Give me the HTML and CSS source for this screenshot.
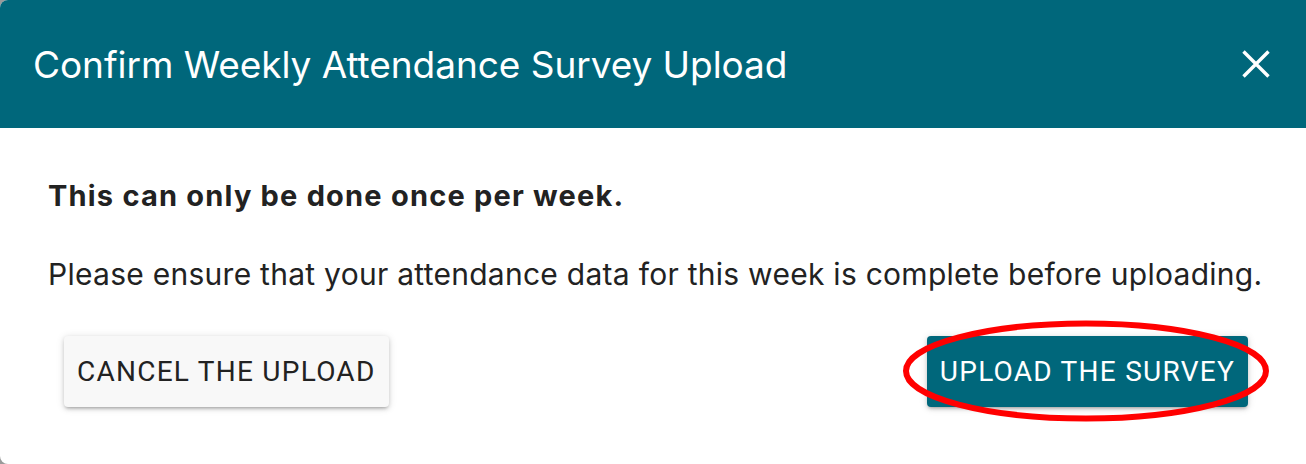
FILE: index.html
```html
<!DOCTYPE html>
<html>
<head>
<meta charset="utf-8">
<link rel="stylesheet" href="styles.css">
</head>
<body>
<div class="dialog">
  <header class="dialog-header">
    <h2 class="dialog-title">Confirm Weekly Attendance Survey Upload</h2>
    <button class="close-btn" aria-label="Close">
      <svg width="28" height="28" viewBox="0 0 28 28"><path d="M1.5 1.5 L26.5 26.5 M26.5 1.5 L1.5 26.5" stroke="#fff" stroke-width="3.4" stroke-linecap="butt"/></svg>
    </button>
  </header>
  <div class="dialog-content">
    <p class="warn">This can only be done once per week.</p>
    <p class="info">Please ensure that your attendance data for this week is complete before uploading.</p>
  </div>
  <div class="dialog-actions">
    <button class="btn btn-cancel">Cancel the upload</button>
    <div class="upload-wrap">
      <button class="btn btn-upload">Upload the survey</button>
      <svg class="highlight" width="380" height="112" viewBox="0 0 380 112"><ellipse cx="190" cy="56" rx="180" ry="47.5" fill="none" stroke="#ff0000" stroke-width="6"/></svg>
    </div>
  </div>
</div>
</body>
</html>
```
FILE: styles.css
```css
html, body {
  margin: 0;
  padding: 0;
  height: 100%;
}
body {
  background: #9a9a9a;
  font-family: Inter, "Liberation Sans", sans-serif;
  overflow: hidden;
}
.dialog {
  background: #fff;
  height: 464px;
  border-radius: 8px 0 0 8px;
  overflow: hidden;
  display: flex;
  flex-direction: column;
}
.dialog-header {
  background: #00677b;
  height: 128px;
  flex: none;
  display: flex;
  align-items: center;
  justify-content: space-between;
  padding: 0 36px 0 33px;
}
.dialog-title {
  margin: 0;
  color: #fff;
  font-weight: 400;
  font-size: 37px;
  letter-spacing: -0.05px;
}
.close-btn {
  background: none;
  border: 0;
  padding: 0;
  width: 28px;
  height: 28px;
  display: flex;
}
.dialog-content {
  padding: 50px 40px 0 48px;
  color: #222;
}
.warn {
  margin: 0;
  font-size: 29px;
  font-weight: 700;
  line-height: 36px;
  letter-spacing: 1.2px;
}
.info {
  margin: 42px 0 0;
  font-size: 30px;
  line-height: 36px;
  letter-spacing: 0.27px;
  white-space: nowrap;
}
.dialog-actions {
  display: flex;
  justify-content: space-between;
  align-items: center;
  padding: 44px 58px 0 64px;
}
.btn {
  font-family: Roboto, "Liberation Sans", sans-serif;
  font-size: 28px;
  font-weight: 400;
  text-transform: uppercase;
  letter-spacing: 1.25px;
  height: 71px;
  padding: 0 13px;
  border: 0;
  border-radius: 4px;
  box-shadow: 0 3px 3px -2px rgba(0,0,0,0.2), 0 2px 4px 0 rgba(0,0,0,0.14), 0 1px 8px 0 rgba(0,0,0,0.12);
}
.btn-cancel {
  background: #f8f8f8;
  color: #222;
}
.btn-upload {
  background: #00677b;
  color: #fff;
}
.upload-wrap {
  position: relative;
}
.highlight {
  position: absolute;
  left: -31px;
  top: -21px;
  pointer-events: none;
}
```
